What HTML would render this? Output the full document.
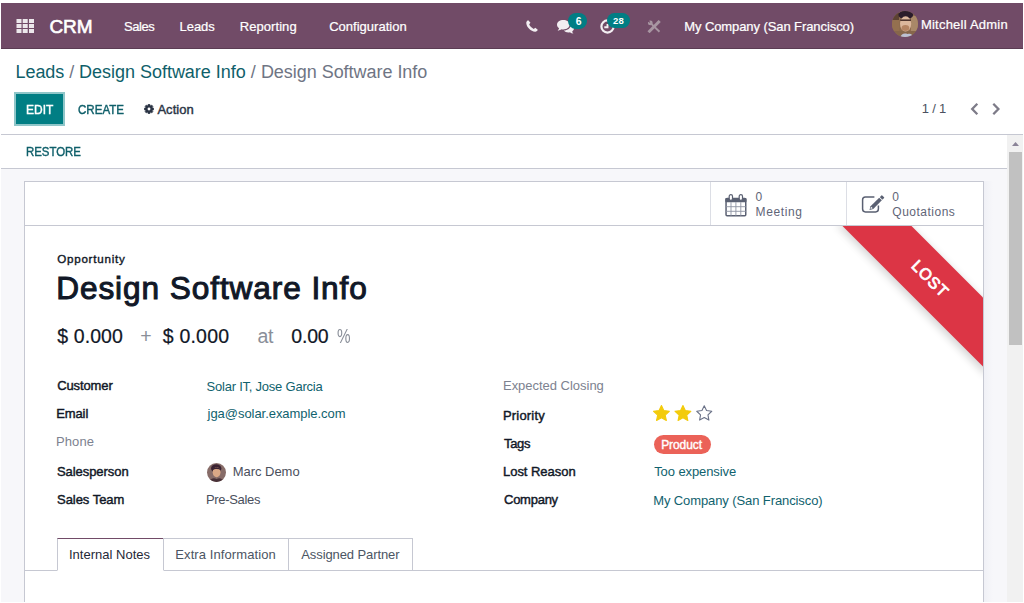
<!DOCTYPE html>
<html>
<head>
<meta charset="utf-8">
<title>Odoo - Design Software Info</title>
<style>
*{box-sizing:border-box;margin:0;padding:0}
html,body{width:1024px;height:603px;overflow:hidden;background:#fff}
body{font-family:"Liberation Sans",sans-serif;font-size:13px;color:#111827;position:relative}
.abs{position:absolute;white-space:nowrap}
.tx{position:absolute;white-space:nowrap;font-family:"Liberation Sans",sans-serif}
#nav{position:absolute;left:1px;top:3px;width:1022px;height:46px;background:#714B67;border-bottom:1px solid #5b3c53}
#cpline{position:absolute;left:1px;top:134px;width:1022px;height:1px;background:#c6c8d2}
#sbline{position:absolute;left:1px;top:168px;width:1006px;height:1px;background:#c6c8d2}
#content{position:absolute;left:1px;top:169px;width:1006px;height:433px;background:#f7f7fa}
#sheet{position:absolute;left:24px;top:181px;width:960px;height:421px;background:#fff;border:1px solid #c6c8d2;border-bottom:0}
.vline{position:absolute;width:1px;background:#dcdee5}
.hline{position:absolute;height:1px;background:#c6c8d2}
#scr{position:absolute;left:1007px;top:135px;width:16px;height:467px;background:#f1f1f1}
#thumb{position:absolute;left:2px;top:17px;width:13px;height:193px;background:#c1c1c1}
</style>
</head>
<body>
<div id="nav"></div>
<!-- apps grid icon -->
<svg class="abs" style="left:15.5px;top:19px" width="19" height="14" viewBox="0 0 19 14"><g fill="#ece7eb"><rect x="0.5" y="0" width="5" height="4"/><rect x="6.7" y="0" width="5" height="4"/><rect x="13" y="0" width="5" height="4"/><rect x="0.5" y="5" width="5" height="4"/><rect x="6.7" y="5" width="5" height="4"/><rect x="13" y="5" width="5" height="4"/><rect x="0.5" y="10" width="5" height="4"/><rect x="6.7" y="10" width="5" height="4"/><rect x="13" y="10" width="5" height="4"/></g></svg>

<!-- EDIT button -->
<div class="abs" style="left:14px;top:92px;width:51px;height:34px;background:#8fc6c9"></div>
<div class="abs" style="left:16px;top:94px;width:47px;height:30px;background:#017e84"></div>

<div id="cpline"></div>
<div id="sbline"></div>
<div id="content"></div>
<div id="sheet"></div>
<div class="abs" style="left:984px;top:181px;width:9px;height:421px;background:linear-gradient(to right,#f0f1f6,#f7f7fa)"></div>
<!-- button box -->
<div class="hline" style="left:25px;top:225px;width:958px"></div>
<div class="vline" style="left:710px;top:182px;height:43px"></div>
<div class="vline" style="left:846px;top:182px;height:43px"></div>

<!-- ribbon -->
<svg class="abs" style="left:803px;top:226px" width="180" height="160" viewBox="0 0 180 160">
  <defs><filter id="rs" x="-20%" y="-20%" width="140%" height="140%"><feGaussianBlur stdDeviation="4.5"/></filter></defs>
  <polygon points="33,-2 104,-2 184,78 184,150" fill="#000" opacity="0.17" filter="url(#rs)"/>
  <polygon points="39.5,0 108.5,0 180,71.5 180,140.5" fill="#dc3545"/>
  <text x="0" y="0" transform="translate(123.3,56.6) rotate(45)" text-anchor="middle" fill="#fff" stroke="#fff" stroke-width="0.8" font-family="Liberation Sans, sans-serif" font-size="16" letter-spacing="0.7">LOST</text>
</svg>

<!-- tag pill -->
<div class="abs" style="left:653.5px;top:435px;width:57px;height:19px;border-radius:10px;background:#eb6258"></div>


<!-- phone -->
<svg class="abs" style="left:525.5px;top:20px" width="12" height="12" viewBox="0 0 14 14"><path d="M2.6 0.3 C1.6 0.6 0.2 1.8 0.3 3.6 C0.6 8.6 5.6 13.5 10.6 13.7 C12.2 13.8 13.5 12.5 13.7 11.4 L10.9 9.0 L9.0 10.4 C7.0 9.8 4.4 7.2 3.7 5.1 L5.2 3.2 Z" fill="#f3eef2"/></svg>
<!-- comments -->
<svg class="abs" style="left:557px;top:20px" width="17" height="14" viewBox="0 0 17 14"><g fill="#f3eef2"><path d="M6.3 0 C2.8 0 0 2.1 0 4.7 C0 6.1 0.8 7.3 2.1 8.2 C1.9 9.1 1.3 9.9 0.6 10.5 C2.2 10.4 3.6 9.9 4.6 9.2 C5.1 9.3 5.7 9.4 6.3 9.4 C9.8 9.4 12.6 7.3 12.6 4.7 C12.6 2.1 9.8 0 6.3 0 Z"/><path d="M13.8 5.0 C13.7 8.0 10.6 10.5 6.8 10.6 C7.8 11.8 9.5 12.5 11.4 12.5 C11.9 12.5 12.4 12.4 12.9 12.3 C13.8 13.0 15.0 13.5 16.5 13.6 C15.8 13.0 15.3 12.2 15.2 11.4 C16.3 10.6 17 9.5 17 8.3 C17 7.0 15.7 5.6 13.8 5.0 Z"/></g></svg>
<!-- badge 6 -->
<div class="abs" style="left:568px;top:13px;width:19px;height:16px;border-radius:8px;background:#017e84"></div>
<!-- clock -->
<svg class="abs" style="left:599.5px;top:18.5px" width="15" height="15" viewBox="0 0 15 15"><circle cx="7.5" cy="7.5" r="6.1" fill="none" stroke="#f3eef2" stroke-width="2.2"/><path d="M7.5 4.9 V8.2 H4.3" fill="none" stroke="#f3eef2" stroke-width="1.9"/></svg>
<!-- badge 28 -->
<div class="abs" style="left:607.3px;top:13px;width:23px;height:15px;border-radius:7.5px;background:#017e84"></div>
<!-- tools (dim) -->
<svg class="abs" style="left:647px;top:19.5px" width="14" height="13" viewBox="0 0 14 13"><g stroke="#a896a2" fill="none"><path d="M12.7 1.0 L1.5 12.2" stroke-width="3"/><path d="M3.3 2.9 L12.5 11.7" stroke-width="1.9"/></g><circle cx="3.3" cy="2.9" r="2.4" fill="#a896a2"/><path d="M3.1 2.7 L-0.4 1.0 L1.4 -0.8 Z" fill="#714B67"/><path d="M2.9 2.5 L0.2 0.6 L1.0 -0.2 Z" fill="#714B67" transform="translate(0.5,0.5)"/></svg>
<!-- gear -->
<svg class="abs" style="left:143.5px;top:104.4px" width="10" height="10" viewBox="0 0 10 10"><polygon points="9.70,4.03 9.70,5.97 8.67,6.00 8.30,6.88 9.01,7.64 7.64,9.01 6.88,8.30 6.00,8.67 5.97,9.70 4.03,9.70 4.00,8.67 3.12,8.30 2.36,9.01 0.99,7.64 1.70,6.88 1.33,6.00 0.30,5.97 0.30,4.03 1.33,4.00 1.70,3.12 0.99,2.36 2.36,0.99 3.12,1.70 4.00,1.33 4.03,0.30 5.97,0.30 6.00,1.33 6.88,1.70 7.64,0.99 9.01,2.36 8.30,3.12 8.67,4.00" fill="#2b3445" stroke="#2b3445" stroke-width="0.5" stroke-linejoin="round"/><circle cx="5" cy="5" r="1.45" fill="#fff"/></svg>
<!-- chevrons -->
<svg class="abs" style="left:969px;top:102px" width="34" height="14" viewBox="0 0 34 14"><g fill="none" stroke="#7d7b88" stroke-width="2.3"><polyline points="8.3,1.8 3.2,7 8.3,12.2"/><polyline points="24.3,1.8 29.4,7 24.3,12.2"/></g></svg>
<!-- calendar -->
<svg class="abs" style="left:724.5px;top:193.5px" width="22" height="23" viewBox="0 0 22 23"><rect x="1.05" y="4.6" width="19.7" height="17.2" rx="1" fill="none" stroke="#5a6072" stroke-width="1.5"/><rect x="0.3" y="3.9" width="21.2" height="4.3" rx="1" fill="#5a6072"/><path d="M6 8.2 V21.8 M10.9 8.2 V21.8 M15.8 8.2 V21.8 M1 12.7 H20.8 M1 17.3 H20.8" fill="none" stroke="#8d93a3" stroke-width="0.9"/><rect x="4.2" y="0.6" width="3.3" height="5.8" rx="1.65" fill="#fff" stroke="#5a6072" stroke-width="1.2"/><rect x="14.2" y="0.6" width="3.3" height="5.8" rx="1.65" fill="#fff" stroke="#5a6072" stroke-width="1.2"/></svg>
<!-- pencil-square -->
<svg class="abs" style="left:860.5px;top:194px" width="24" height="20" viewBox="0 0 24 20"><path d="M13.4 2.9 H4.4 C2.7 2.9 1.6 4.0 1.6 5.7 V15.1 C1.6 16.8 2.7 17.9 4.4 17.9 H14.6 C16.3 17.9 17.4 16.8 17.4 15.1 V11.4" fill="none" stroke="#5a6072" stroke-width="1.5"/><g transform="translate(8.5,16) rotate(-45)" fill="#5a6072"><path d="M0 0 L3.4 -1.9 H15.6 V1.9 H3.4 Z"/><rect x="16.4" y="-1.9" width="2.9" height="3.8" rx="0.6"/><path d="M1.3 0 L3.5 -1.1 V1.1 Z" fill="#fff"/></g></svg>
<!-- stars -->
<svg class="abs" style="left:652px;top:403px" width="64" height="20" viewBox="0 0 64 20"><polygon points="9.45,2.50 11.80,7.56 17.34,8.24 13.25,12.04 14.33,17.51 9.45,14.80 4.57,17.51 5.65,12.04 1.56,8.24 7.10,7.56" fill="#f3cb0c" stroke="#f3cb0c" stroke-width="1.1" stroke-linejoin="round"/><polygon points="30.95,2.50 33.30,7.56 38.84,8.24 34.75,12.04 35.83,17.51 30.95,14.80 26.07,17.51 27.15,12.04 23.06,8.24 28.60,7.56" fill="#f3cb0c" stroke="#f3cb0c" stroke-width="1.1" stroke-linejoin="round"/><polygon points="52.25,2.80 54.54,7.54 59.76,8.26 55.96,11.91 56.89,17.09 52.25,14.60 47.61,17.09 48.54,11.91 44.74,8.26 49.96,7.54" fill="none" stroke="#6a7187" stroke-width="1.1" stroke-linejoin="round"/></svg>
<!-- avatar mitchell -->
<svg class="abs" style="left:892px;top:11px" width="26" height="26" viewBox="0 0 26 26"><defs><clipPath id="c1"><circle cx="13" cy="13" r="13"/></clipPath><filter id="b1" x="-10%" y="-10%" width="120%" height="120%"><feGaussianBlur stdDeviation="0.45"/></filter></defs><g clip-path="url(#c1)"><rect width="26" height="26" fill="#8e6c4e"/><g filter="url(#b1)"><rect x="-2" y="1" width="9" height="8" fill="#5c4232"/><rect x="-2" y="9" width="9" height="12" fill="#94704f"/><rect x="19" y="5" width="9" height="16" fill="#a98868"/><rect x="-2" y="20" width="30" height="8" fill="#86664c"/><ellipse cx="13.8" cy="3.8" rx="7.4" ry="4.4" fill="#2a1b2b"/><ellipse cx="13.6" cy="12.8" rx="5.6" ry="7.6" fill="#dcb79d"/><path d="M8.2 9.2 H19" stroke="#4f352e" stroke-width="1.6"/><ellipse cx="13.4" cy="17" rx="3.9" ry="2.9" fill="#b58463"/><path d="M8 27 C9.5 22.5 12 22 15.5 23 C18.5 22 20.5 23 21.5 27 Z" fill="#bcc0d3"/></g></g></svg>
<!-- avatar marc -->
<svg class="abs" style="left:207px;top:463px" width="19" height="19" viewBox="0 0 19 19"><defs><clipPath id="c2"><circle cx="9.5" cy="9.5" r="9.5"/></clipPath><filter id="b2"><feGaussianBlur stdDeviation="0.6"/></filter></defs><g clip-path="url(#c2)"><rect width="19" height="19" fill="#876c68"/><g filter="url(#b2)"><ellipse cx="9.2" cy="5.4" rx="5.2" ry="4.2" fill="#3a2432"/><ellipse cx="9.6" cy="9.2" rx="3.9" ry="5.0" fill="#dba886"/><path d="M2 20 C3.5 14.8 7 14.6 9.6 16 C12 14.6 15.5 14.8 17 20 Z" fill="#4a3238"/><path d="M5.4 7.4 C5.8 3.6 12.2 3 13.6 7 C11.4 5.4 7.6 5.6 5.4 7.4 Z" fill="#3a2432"/></g></g></svg>


<!-- tabs -->
<div class="hline" style="left:25px;top:570px;width:958px"></div>
<div class="abs" style="left:57px;top:538px;width:107px;height:33px;border:1px solid #c6c8d2;border-top:1px solid #714B67;border-bottom:1px solid #fff;background:#fff"></div>
<div class="abs" style="left:163px;top:538px;width:126px;height:32px;border:1px solid #c6c8d2;border-bottom:0"></div>
<div class="abs" style="left:288px;top:538px;width:125px;height:32px;border:1px solid #c6c8d2;border-bottom:0"></div>

<div class="tx" id="crm" style="left:49.40px;top:16.90px;font-size:19px;line-height:20px;letter-spacing:-0.021px;color:#fff;-webkit-text-stroke:0.63px #fff">CRM</div>
<div class="tx" id="m1" style="left:124.00px;top:16.50px;font-size:13px;line-height:20px;letter-spacing:-0.455px;color:#fff;-webkit-text-stroke:0.22px #fff">Sales</div>
<div class="tx" id="m2" style="left:179.60px;top:16.50px;font-size:13px;line-height:20px;letter-spacing:-0.080px;color:#fff;-webkit-text-stroke:0.22px #fff">Leads</div>
<div class="tx" id="m3" style="left:239.70px;top:16.50px;font-size:13px;line-height:20px;letter-spacing:0.070px;color:#fff;-webkit-text-stroke:0.22px #fff">Reporting</div>
<div class="tx" id="m4" style="left:329.20px;top:16.50px;font-size:13px;line-height:20px;letter-spacing:0.009px;color:#fff;-webkit-text-stroke:0.22px #fff">Configuration</div>
<div class="tx" id="comp" style="left:684.20px;top:16.90px;font-size:13px;line-height:20px;letter-spacing:-0.084px;color:#fff;-webkit-text-stroke:0.22px #fff">My Company (San Francisco)</div>
<div class="tx" id="user" style="left:920.90px;top:14.50px;font-size:13px;line-height:20px;letter-spacing:0.231px;color:#fff;-webkit-text-stroke:0.22px #fff">Mitchell Admin</div>
<div class="tx" id="bc1" style="left:15.60px;top:61.60px;font-size:18px;line-height:20px;letter-spacing:-0.086px;color:#0f5f6a">Leads</div>
<div class="tx" id="bcs1" style="left:69.20px;top:61.60px;font-size:18px;line-height:20px;letter-spacing:0.000px;color:#6f7584">/</div>
<div class="tx" id="bc2" style="left:79.00px;top:61.60px;font-size:18px;line-height:20px;letter-spacing:-0.015px;color:#0f5f6a">Design Software Info</div>
<div class="tx" id="bcs2" style="left:250.70px;top:61.60px;font-size:18px;line-height:20px;letter-spacing:0.000px;color:#6f7584">/</div>
<div class="tx" id="bc3" style="left:260.90px;top:61.60px;font-size:18px;line-height:20px;letter-spacing:-0.036px;color:#6f7584">Design Software Info</div>
<div class="tx" id="edit" style="left:25.58px;top:100.20px;font-size:13px;line-height:20px;color:#fff;transform-origin:0 0;transform:scaleX(0.9208);-webkit-text-stroke:0.43px #fff">EDIT</div>
<div class="tx" id="create" style="left:77.90px;top:100.20px;font-size:13px;line-height:20px;color:#0f5f6a;transform-origin:0 0;transform:scaleX(0.8888);-webkit-text-stroke:0.43px #0f5f6a">CREATE</div>
<div class="tx" id="action" style="left:157.40px;top:100.20px;font-size:13px;line-height:20px;letter-spacing:0.040px;color:#2b3445;-webkit-text-stroke:0.43px #2b3445">Action</div>
<div class="tx" id="pager" style="left:921.80px;top:98.50px;font-size:13px;line-height:20px;letter-spacing:-0.216px;color:#4b5060">1 / 1</div>
<div class="tx" id="restore" style="left:25.87px;top:142.10px;font-size:13px;line-height:20px;color:#0f5f6a;transform-origin:0 0;transform:scaleX(0.8775);-webkit-text-stroke:0.43px #0f5f6a">RESTORE</div>
<div class="tx" id="bm0" style="left:755.60px;top:187.00px;font-size:12px;line-height:20px;letter-spacing:0.000px;color:#5f6577">0</div>
<div class="tx" id="bm1" style="left:755.60px;top:202.00px;font-size:12px;line-height:20px;letter-spacing:0.614px;color:#5f6577">Meeting</div>
<div class="tx" id="bq0" style="left:892.30px;top:187.00px;font-size:12px;line-height:20px;letter-spacing:0.000px;color:#5f6577">0</div>
<div class="tx" id="bq1" style="left:892.30px;top:202.00px;font-size:12px;line-height:20px;letter-spacing:0.496px;color:#5f6577">Quotations</div>
<div class="tx" id="opp" style="left:57.20px;top:249.40px;font-size:11.6px;line-height:20px;letter-spacing:0.766px;color:#111827;-webkit-text-stroke:0.38px #111827">Opportunity</div>
<div class="tx" id="title" style="left:56.20px;top:266.20px;font-size:31.6px;line-height:44px;letter-spacing:0.916px;color:#111827;-webkit-text-stroke:1.04px #111827">Design Software Info</div>
<div class="tx" id="a1" style="left:57.30px;top:326.20px;font-size:19.5px;line-height:20px;letter-spacing:0.081px;color:#111827;-webkit-text-stroke:0.22px #111827">$ 0.000</div>
<div class="tx" id="a2" style="left:140.30px;top:326.20px;font-size:19.5px;line-height:20px;letter-spacing:0.000px;color:#8a8f99">+</div>
<div class="tx" id="a3" style="left:162.80px;top:326.20px;font-size:19.5px;line-height:20px;letter-spacing:0.197px;color:#111827;-webkit-text-stroke:0.22px #111827">$ 0.000</div>
<div class="tx" id="a4" style="left:257.50px;top:326.20px;font-size:19.5px;line-height:20px;letter-spacing:-0.345px;color:#8a8f99">at</div>
<div class="tx" id="a5" style="left:291.30px;top:326.20px;font-size:19.5px;line-height:20px;letter-spacing:-0.203px;color:#111827;-webkit-text-stroke:0.22px #111827">0.00</div>
<div class="tx" id="a6" style="left:336.50px;top:326.20px;font-size:19.5px;line-height:20px;color:#8a8f99;transform-origin:0 0;transform:scaleX(0.7824)">%</div>
<div class="tx" id="l1" style="left:57.20px;top:375.80px;font-size:13px;line-height:20px;letter-spacing:-0.117px;color:#111827;-webkit-text-stroke:0.43px #111827">Customer</div>
<div class="tx" id="v1" style="left:206.60px;top:376.50px;font-size:13px;line-height:20px;letter-spacing:-0.231px;color:#10626e">Solar IT, Jose Garcia</div>
<div class="tx" id="l2" style="left:56.20px;top:403.90px;font-size:13px;line-height:20px;letter-spacing:-0.105px;color:#111827;-webkit-text-stroke:0.43px #111827">Email</div>
<div class="tx" id="v2" style="left:207.60px;top:403.90px;font-size:13px;line-height:20px;letter-spacing:-0.050px;color:#10626e">jga@solar.example.com</div>
<div class="tx" id="l3" style="left:56.00px;top:431.50px;font-size:13px;line-height:20px;letter-spacing:0.097px;color:#7d8290">Phone</div>
<div class="tx" id="l4" style="left:57.00px;top:461.50px;font-size:13px;line-height:20px;letter-spacing:-0.064px;color:#111827;-webkit-text-stroke:0.43px #111827">Salesperson</div>
<div class="tx" id="v4" style="left:232.75px;top:461.50px;font-size:13px;line-height:20px;letter-spacing:-0.037px;color:#4a4f5c">Marc Demo</div>
<div class="tx" id="l5" style="left:57.00px;top:489.90px;font-size:13px;line-height:20px;letter-spacing:-0.038px;color:#111827;-webkit-text-stroke:0.43px #111827">Sales Team</div>
<div class="tx" id="v5" style="left:205.90px;top:489.90px;font-size:13px;line-height:20px;letter-spacing:-0.310px;color:#4a4f5c">Pre-Sales</div>
<div class="tx" id="r1" style="left:503.00px;top:375.90px;font-size:13px;line-height:20px;letter-spacing:-0.023px;color:#7d8290">Expected Closing</div>
<div class="tx" id="r2" style="left:503.00px;top:405.50px;font-size:13px;line-height:20px;letter-spacing:0.179px;color:#111827;-webkit-text-stroke:0.43px #111827">Priority</div>
<div class="tx" id="r3" style="left:504.00px;top:433.50px;font-size:13px;line-height:20px;letter-spacing:-0.320px;color:#111827;-webkit-text-stroke:0.43px #111827">Tags</div>
<div class="tx" id="tag" style="left:661.20px;top:434.50px;font-size:12px;line-height:20px;letter-spacing:-0.087px;color:#fff;-webkit-text-stroke:0.4px #fff">Product</div>
<div class="tx" id="r4" style="left:503.00px;top:461.50px;font-size:13px;line-height:20px;letter-spacing:-0.036px;color:#111827;-webkit-text-stroke:0.43px #111827">Lost Reason</div>
<div class="tx" id="rv4" style="left:654.20px;top:462.30px;font-size:13px;line-height:20px;letter-spacing:-0.090px;color:#10626e">Too expensive</div>
<div class="tx" id="r5" style="left:504.00px;top:489.70px;font-size:13px;line-height:20px;letter-spacing:-0.256px;color:#111827;-webkit-text-stroke:0.43px #111827">Company</div>
<div class="tx" id="rv5" style="left:653.20px;top:490.50px;font-size:13px;line-height:20px;letter-spacing:-0.100px;color:#10626e">My Company (San Francisco)</div>
<div class="tx" id="t1" style="left:69.00px;top:544.50px;font-size:13px;line-height:20px;letter-spacing:0.005px;color:#1f2937">Internal Notes</div>
<div class="tx" id="t2" style="left:175.30px;top:544.50px;font-size:13px;line-height:20px;letter-spacing:0.090px;color:#4b5563">Extra Information</div>
<div class="tx" id="t3" style="left:301.30px;top:544.50px;font-size:13px;line-height:20px;letter-spacing:-0.100px;color:#4b5563">Assigned Partner</div>
<div class="tx" id="b6" style="left:575.70px;top:11.50px;font-size:10.4px;line-height:20px;letter-spacing:0.000px;color:#fff;font-weight:bold">6</div>
<div class="tx" id="b28" style="left:613.00px;top:10.70px;font-size:9.5px;line-height:20px;letter-spacing:0.217px;color:#fff;font-weight:bold">28</div>

<div id="scr">
  <svg class="abs" style="left:5px;top:7px" width="7" height="4" viewBox="0 0 7 4"><polygon points="0,4 3.5,0 7,4" fill="#8b8498"/></svg>
  <div id="thumb"></div>
</div>
</body>
</html>
